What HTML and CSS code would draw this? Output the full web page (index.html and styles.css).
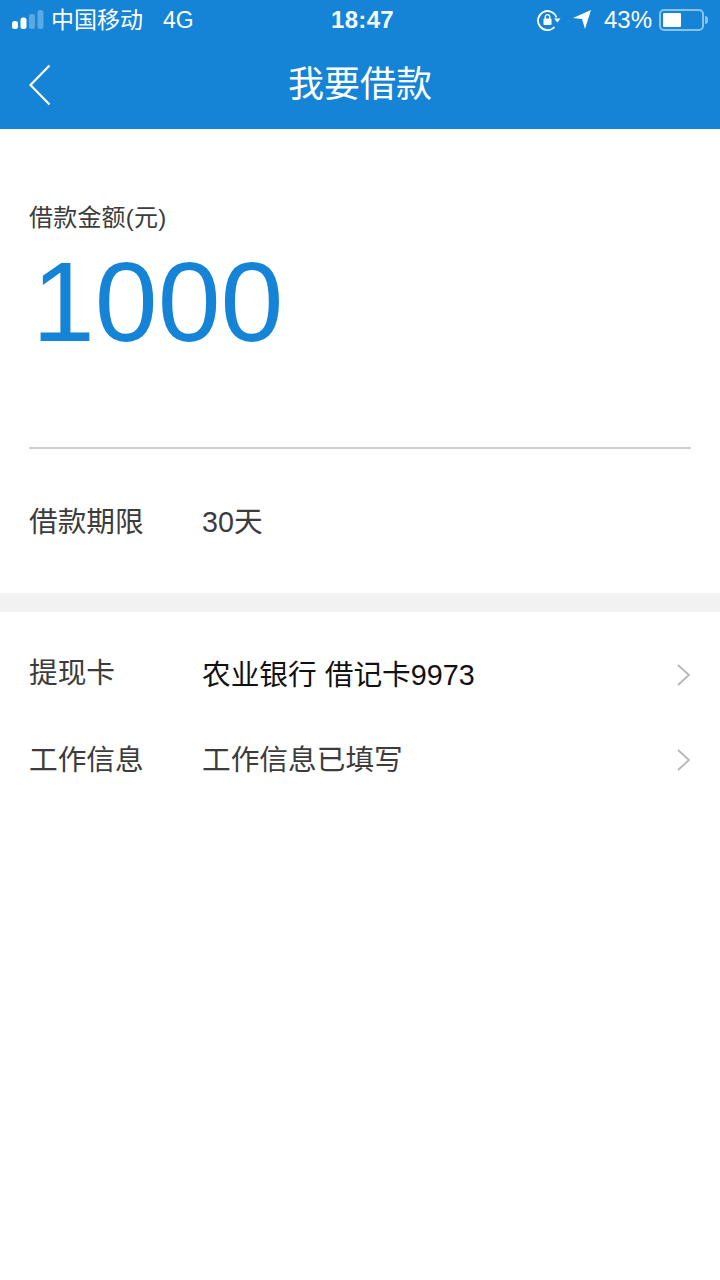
FILE: index.html
```
<!DOCTYPE html>
<html lang="zh">
<head>
<meta charset="utf-8">
<title>我要借款</title>
<link rel="stylesheet" href="styles.css">
</head>
<body>
<header class="header">
  <div class="status">
    <div class="status-left">
      <svg class="signal" width="32" height="20" viewBox="0 0 32 20"><rect x="0" y="11" width="6" height="8" rx="2.500" fill="#fff"/><rect x="8.500" y="7.500" width="6" height="11.500" rx="2.500" fill="#fff"/><rect x="17" y="4" width="6" height="15" rx="2.500" fill="#fff" opacity=".3"/><rect x="25.500" y="0" width="6" height="19" rx="2.500" fill="#fff" opacity=".3"/></svg>
      <span class="carrier">中国移动</span>
      <span class="net">4G</span>
    </div>
    <div class="clock">18:47</div>
    <div class="status-right">
      <svg class="lock" width="24" height="22" viewBox="0 0 24 22"><path d="M17.500 18A9.500 9.500 0 1 1 19.500 8.500" fill="none" stroke="#fff" stroke-width="1.800"/><path d="M17 9.500h6.500l-3.200 4z" fill="#fff"/><rect x="6.500" y="9.500" width="8" height="6.500" rx="1" fill="#fff"/><path d="M8.300 10V7.800a2.200 2.200 0 0 1 4.400 0V10" fill="none" stroke="#fff" stroke-width="1.400"/></svg>
      <svg class="loc" width="20" height="20" viewBox="0 0 20 20"><path d="M1 8 19 0 13 19 10 9z" fill="#fff"/></svg>
      <span class="pct">43%</span>
      <div class="battery"><div class="battery-fill"></div></div>
      <div class="battery-cap"></div>
    </div>
  </div>
  <div class="nav">
    <svg class="back" width="24" height="42" viewBox="0 0 24 42"><path d="M21.500 1.500 2.500 21 21.500 40.500" fill="none" stroke="#fff" stroke-width="2.200"/></svg>
    <h1 class="title">我要借款</h1>
  </div>
</header>
<main>
  <section class="amount">
    <div class="amount-label">借款金额(元)</div>
    <div class="amount-value">1000</div>
    <div class="rule"></div>
    <div class="term"><span class="row-label">借款期限</span><span class="row-value">30天</span></div>
  </section>
  <div class="gap"></div>
  <section class="list">
    <div class="row row-card">
      <span class="row-label">提现卡</span>
      <span class="row-value dark">农业银行 借记卡9973</span>
      <svg class="chev" width="14" height="22" viewBox="0 0 14 22"><path d="M1 1l11 10L1 21" fill="none" stroke="#b4b4b4" stroke-width="1.700"/></svg>
    </div>
    <div class="row row-work">
      <span class="row-label">工作信息</span>
      <span class="row-value">工作信息已填写</span>
      <svg class="chev" width="14" height="22" viewBox="0 0 14 22"><path d="M1 1l11 10L1 21" fill="none" stroke="#b4b4b4" stroke-width="1.700"/></svg>
    </div>
  </section>
</main>
</body>
</html>
```
FILE: styles.css
```
* { box-sizing: border-box; }
html, body { margin: 0; padding: 0; }
body { width: 720px; height: 1280px; overflow: hidden; background: #fff; font-family: "Liberation Sans", "Noto Sans CJK SC", sans-serif; color: #3c3c3c; }
.header { background: #1584d6; height: 129px; color: #fff; }
.status { height: 40px; display: flex; align-items: center; justify-content: space-between; position: relative; padding: 0 12px; font-size: 23px; }
.status-left, .status-right { display: flex; align-items: center; }
.signal { display: block; }
.carrier { margin-left: 7px; font-size: 23px; line-height: 36px; }
.net { margin-left: 20px; font-size: 23px; line-height: 36px; }
.clock { position: absolute; left: 0; right: 0; text-align: center; font-size: 24px; font-weight: 700; letter-spacing: .3px; padding-left: 5px; opacity: .95; }
.lock { margin-right: 11px; }
.loc { margin-right: 12px; }
.pct { font-size: 24px; margin-right: 7px; }
.battery { width: 45px; height: 22px; border: 2px solid rgba(255,255,255,.5); border-radius: 5px; padding: 2px; }
.battery-fill { width: 18px; height: 100%; background: #fff; border-radius: 1px; }
.battery-cap { width: 3px; height: 8px; background: rgba(255,255,255,.5); border-radius: 0 3px 3px 0; margin-left: 1px; }
.nav { height: 88px; position: relative; display: flex; align-items: center; justify-content: center; }
.back { position: absolute; left: 28px; top: 24px; }
.title { margin: 0; font-size: 36px; font-weight: 400; line-height: 1; margin-top: 2px; }
.amount { padding: 0 29px; height: 464px; }
.amount-label { padding-top: 75px; font-size: 24px; line-height: 28px; letter-spacing: .2px; }
.amount-value { margin-top: 14px; font-size: 113px; line-height: 113px; color: #1584d6; padding-left: 3px; }
.rule { margin-top: 88px; height: 2px; background: #cfcfcf; }
.term { display: flex; align-items: center; height: 144px; padding-bottom: 4px; }
.row-label { width: 173px; font-size: 28.700px; flex: none; }
.row-value { font-size: 28.700px; flex: 1; }
.dark { color: #111; }
.gap { height: 19px; background: #f2f2f2; }
.list { padding: 0 29px; }
.row { display: flex; align-items: center; height: 85px; }
.row-card { margin-top: 20px; }
.row .row-value { margin-top: -4px; }
.row .row-label { margin-top: -4px; }
.row-card .row-label { margin-top: -8px; }
.chev { flex: none; }
```
